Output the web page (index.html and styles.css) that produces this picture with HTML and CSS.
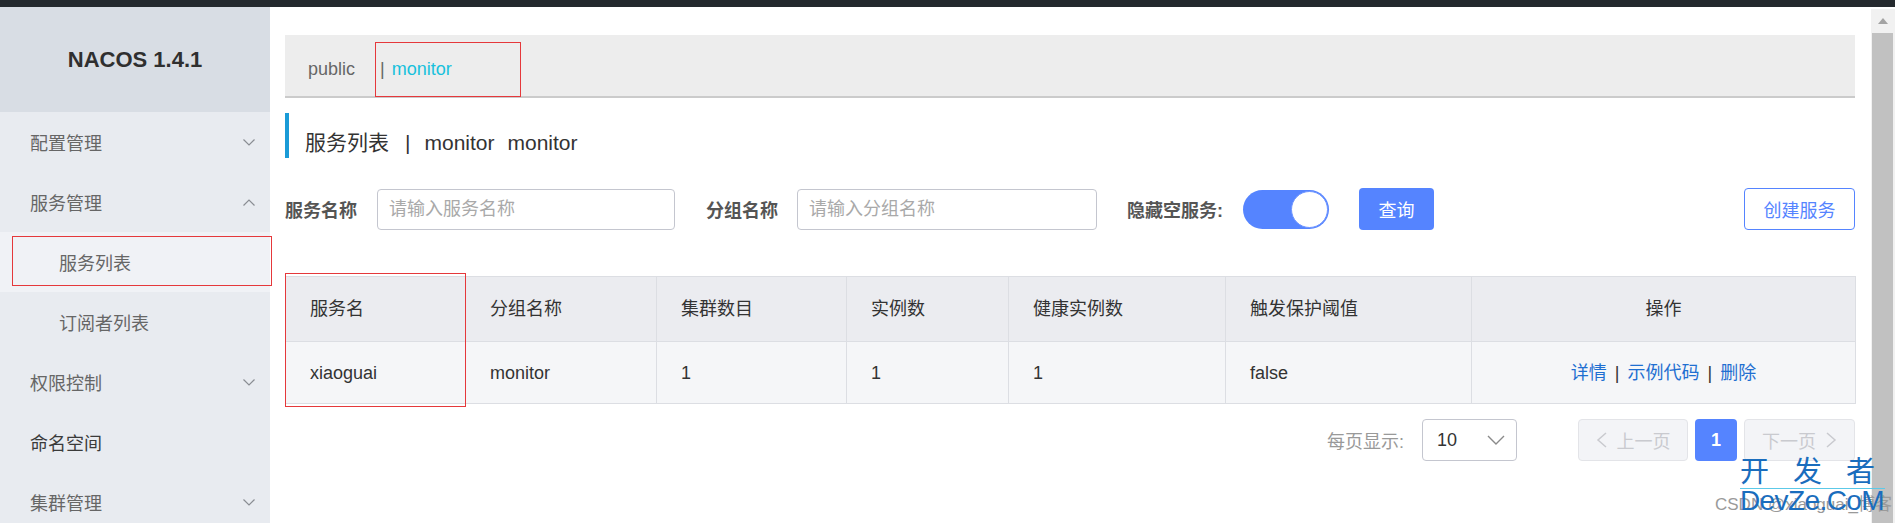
FILE: index.html
```html
<!DOCTYPE html>
<html lang="zh-CN">
<head>
<meta charset="utf-8">
<title>Nacos - 服务列表</title>
<link rel="stylesheet" href="styles.css">
</head>
<body>
<div class="topbar"></div>
<div class="app">
  <aside class="sidebar">
    <div class="logo">NACOS 1.4.1</div>
    <nav class="menu">
      <div class="item"><span class="label">配置管理</span><svg class="chev" width="12" height="7" viewBox="0 0 12 7"><path d="M0.5 0.5 L6 6 L11.5 0.5" fill="none" stroke="#8a8d93" stroke-width="1.2"/></svg></div>
      <div class="item"><span class="label">服务管理</span><svg class="chev" width="12" height="7" viewBox="0 0 12 7"><path d="M0.5 6.5 L6 1 L11.5 6.5" fill="none" stroke="#8a8d93" stroke-width="1.2"/></svg></div>
      <div class="item sub active"><span class="label">服务列表</span><span class="mark side-mark"></span></div>
      <div class="item sub"><span class="label">订阅者列表</span></div>
      <div class="item"><span class="label">权限控制</span><svg class="chev" width="12" height="7" viewBox="0 0 12 7"><path d="M0.5 0.5 L6 6 L11.5 0.5" fill="none" stroke="#8a8d93" stroke-width="1.2"/></svg></div>
      <div class="item leaf"><span class="label">命名空间</span></div>
      <div class="item"><span class="label">集群管理</span><svg class="chev" width="12" height="7" viewBox="0 0 12 7"><path d="M0.5 0.5 L6 6 L11.5 0.5" fill="none" stroke="#8a8d93" stroke-width="1.2"/></svg></div>
    </nav>
  </aside>

  <main class="main">
    <div class="tabs">
      <span class="tab-public">public</span>
      <span class="tab-current"><span class="sep">|</span><span class="ns">monitor</span></span>
    </div>

    <div class="title">
      <span>服务列表</span><span class="title-sep">|</span><span>monitor</span><span class="title-gap">monitor</span>
    </div>

    <div class="filters">
      <label class="flabel l1">服务名称</label>
      <input class="finput i1" type="text" placeholder="请输入服务名称">
      <label class="flabel l2">分组名称</label>
      <input class="finput i2" type="text" placeholder="请输入分组名称">
      <label class="flabel l3">隐藏空服务:</label>
      <div class="switch"><div class="knob"></div></div>
      <button class="btn-primary">查询</button>
      <button class="btn-outline">创建服务</button>
    </div>

    <div class="table-wrap">
      <table class="grid">
        <colgroup>
          <col class="c1"><col class="c2"><col class="c3"><col class="c4"><col class="c5"><col class="c6"><col class="c7">
        </colgroup>
        <thead>
          <tr><th>服务名</th><th>分组名称</th><th>集群数目</th><th>实例数</th><th>健康实例数</th><th>触发保护阈值</th><th class="center">操作</th></tr>
        </thead>
        <tbody>
          <tr><td>xiaoguai</td><td>monitor</td><td>1</td><td>1</td><td>1</td><td>false</td>
            <td class="center"><a class="link">详情</a><span class="lsep">|</span><a class="link">示例代码</a><span class="lsep">|</span><a class="link">删除</a></td></tr>
        </tbody>
      </table>
      <span class="mark table-mark"></span>
    </div>

    <div class="pager">
      <span class="plabel">每页显示:</span>
      <div class="pselect"><span>10</span><svg width="18" height="10" viewBox="0 0 18 10"><path d="M1 1 L9 9 L17 1" fill="none" stroke="#8a8a8a" stroke-width="1.4"/></svg></div>
      <div class="pbtn prev"><svg width="11" height="16" viewBox="0 0 11 16"><path d="M10 1 L2 8 L10 15" fill="none" stroke="#c9cacf" stroke-width="1.5"/></svg><span>上一页</span></div>
      <div class="pnum">1</div>
      <div class="pbtn next"><span>下一页</span><svg width="11" height="16" viewBox="0 0 11 16"><path d="M1 1 L9 8 L1 15" fill="none" stroke="#c9cacf" stroke-width="1.5"/></svg></div>
    </div>
  </main>

  <div class="scrollbar">
    <div class="sb-head"><span class="sb-arrow"></span></div>
    <div class="sb-thumb"></div>
  </div>
</div>

<div class="watermark">
  <span class="wm-gray">CSDN @xiaoguai_博客</span>
  <span class="wm-cn">开 发 者</span>
  <span class="wm-line"></span>
  <span class="wm-en">DevZe.CoM</span>
</div>
</body>
</html>
```

FILE: styles.css
```css
* { box-sizing: border-box; }

html, body {
  margin: 0;
  padding: 0;
}

body {
  width: 1895px;
  height: 523px;
  overflow: hidden;
  position: relative;
  background: #ffffff;
  font-family: "Liberation Sans", "Noto Sans CJK SC", sans-serif;
  font-size: 18px;
  color: #333333;
}

.topbar {
  height: 7px;
  background: #24292e;
}

.app {
  display: flex;
  height: 516px;
}

/* ---------- sidebar ---------- */
.sidebar {
  width: 270px;
  flex: none;
  background: #e8ebf0;
  position: relative;
  z-index: 1;
}

.logo {
  height: 105px;
  background: #d8dde4;
  display: flex;
  align-items: center;
  justify-content: center;
  font-size: 22px;
  font-weight: bold;
  color: #2f2f2f;
}

.item {
  position: relative;
  height: 60px;
  display: flex;
  align-items: center;
  justify-content: space-between;
  padding: 0 15px 0 30px;
  color: #666666;
  font-size: 18px;
  line-height: 24px;
}

.item .label { margin-top: 4px; }

.item.sub { padding-left: 59px; }
.item.active { background: #f0f2f6; }
.item.leaf { color: #3a3a3a; }

.chev { display: block; }

.mark {
  position: absolute;
  border: 1px solid #e5383b;
  pointer-events: none;
}

.side-mark {
  left: 12px;
  top: 4px;
  width: 260px;
  height: 50px;
}

/* ---------- main ---------- */
.main {
  flex: 1;
  min-width: 0;
  padding: 28px 16px 0 15px;
}

.tabs {
  height: 63px;
  background: #ededed;
  border-bottom: 2px solid #cbcbcb;
  display: flex;
  align-items: flex-start;
  padding-left: 23px;
}

.tab-public {
  margin-top: 22px;
  line-height: 24px;
  color: #666666;
}

.tab-current {
  margin-left: 20px;
  margin-top: 7px;
  width: 146px;
  height: 55px;
  border: 1px solid #e5383b;
  padding: 14px 0 0 4px;
  line-height: 24px;
  white-space: nowrap;
}

.tab-current .sep { color: #666666; }
.tab-current .ns { color: #17c1dc; margin-left: 7px; }

.title {
  margin-top: 15px;
  height: 45px;
  border-left: 4px solid #1a9bd7;
  padding: 17px 0 0 16px;
  font-size: 21px;
  line-height: 26px;
  color: #333333;
  white-space: nowrap;
}

.title-sep { margin: 0 14px 0 16px; }
.title-gap { margin-left: 13px; }

.filters {
  margin-top: 30px;
  height: 42px;
  display: flex;
  align-items: center;
}

.flabel {
  font-weight: bold;
  color: #555555;
  font-size: 18px;
  white-space: nowrap;
}

.l1 { margin-right: 20px; }
.l2 { margin-right: 19px; }
.l3 { margin-right: 20px; }

.finput {
  height: 41px;
  border: 1px solid #c4c6cf;
  border-radius: 4px;
  padding: 0 11px;
  font-family: inherit;
  font-size: 18px;
  color: #333333;
  background: #ffffff;
  outline: none;
}

.finput::placeholder { color: #a9a9a9; }

.i1 { width: 298px; margin-right: 31px; }
.i2 { width: 300px; margin-right: 30px; }

.switch {
  width: 86px;
  height: 39px;
  border-radius: 20px;
  background: #5584ff;
  display: flex;
  align-items: center;
  justify-content: flex-end;
  padding-right: 1px;
  margin-right: 30px;
}

.knob {
  width: 37px;
  height: 37px;
  border-radius: 50%;
  background: #ffffff;
  border: 1px solid #6e95ff;
}

.btn-primary {
  width: 75px;
  height: 42px;
  border: none;
  border-radius: 4px;
  background: #5584ff;
  color: #ffffff;
  font-family: inherit;
  font-size: 18px;
  padding: 0;
}

.btn-outline {
  margin-left: auto;
  width: 111px;
  height: 42px;
  border: 1px solid #5584ff;
  border-radius: 4px;
  background: #ffffff;
  color: #5584ff;
  font-family: inherit;
  font-size: 18px;
  padding: 0;
}

/* ---------- table ---------- */
.table-wrap {
  position: relative;
  margin-top: 46px;
}

.grid {
  width: 1570px;
  table-layout: fixed;
  border-collapse: collapse;
}

.c1 { width: 180px; }
.c2 { width: 191px; }
.c3 { width: 190px; }
.c4 { width: 162px; }
.c5 { width: 217px; }
.c6 { width: 246px; }
.c7 { width: 384px; }

.grid th,
.grid td {
  border: 1px solid #dcdee3;
  padding: 0 0 0 24px;
  text-align: left;
  font-weight: normal;
  font-size: 18px;
  line-height: 24px;
  color: #333333;
  white-space: nowrap;
}

.grid th { height: 65px; background: #ebecf0; }
.grid td { height: 62px; background: #f5f6f8; }

.grid .center { text-align: center; padding-left: 0; }

.link { color: #1f6fd1; }
.lsep { color: #333333; margin: 0 8px; }

.table-mark {
  left: 0;
  top: -3px;
  width: 181px;
  height: 134px;
}

/* ---------- pager ---------- */
.pager {
  margin-top: 15px;
  height: 42px;
  display: flex;
  justify-content: flex-end;
  align-items: center;
}

.plabel {
  color: #999999;
  margin-right: 18px;
}

.pselect {
  width: 95px;
  height: 42px;
  border: 1px solid #c4c6cf;
  border-radius: 4px;
  display: flex;
  align-items: center;
  justify-content: space-between;
  padding: 0 11px 0 14px;
  color: #333333;
}

.pselect svg { display: block; }

.pbtn {
  width: 110px;
  height: 42px;
  background: #f3f4f7;
  border: 1px solid #e3e4e8;
  border-radius: 4px;
  color: #c9cacf;
  display: flex;
  align-items: center;
  justify-content: center;
  gap: 10px;
}

.pbtn svg { display: block; }

.prev { margin-left: 61px; }
.next { margin-left: 7px; width: 111px; }

.pnum {
  margin-left: 7px;
  width: 42px;
  height: 42px;
  border-radius: 4px;
  background: #5584ff;
  color: #ffffff;
  font-weight: bold;
  display: flex;
  align-items: center;
  justify-content: center;
}

/* ---------- scrollbar ---------- */
.scrollbar {
  width: 24px;
  flex: none;
  margin-top: 2px;
  background: #f1f1f1;
  display: flex;
  flex-direction: column;
}

.sb-head {
  height: 24px;
  display: flex;
  align-items: center;
  justify-content: center;
}

.sb-arrow {
  width: 0;
  height: 0;
  border-left: 5px solid transparent;
  border-right: 5px solid transparent;
  border-bottom: 6px solid #a3a3a3;
}

.sb-thumb {
  flex: 1;
  margin: 0 2px 0 1px;
  background: #c1c1c1;
}

/* ---------- watermark ---------- */
.watermark {
  position: absolute;
  left: 1715px;
  top: 455px;
  width: 180px;
  height: 68px;
  pointer-events: none;
  z-index: 2;
}

.wm-gray {
  position: absolute;
  left: 0;
  top: 39px;
  font-size: 17px;
  line-height: 22px;
  color: #9a9a9a;
  white-space: nowrap;
}

.wm-cn {
  position: absolute;
  left: 25px;
  top: 2px;
  font-size: 29px;
  line-height: 30px;
  word-spacing: 16px;
  color: #1a6dbd;
  white-space: nowrap;
}

.wm-line {
  position: absolute;
  left: 25px;
  top: 33px;
  width: 145px;
  height: 1px;
  background: #5cc9e8;
}

.wm-en {
  position: absolute;
  left: 25px;
  top: 32px;
  font-size: 28px;
  line-height: 28px;
  letter-spacing: -0.6px;
  color: #1a6dbd;
  white-space: nowrap;
}
```
